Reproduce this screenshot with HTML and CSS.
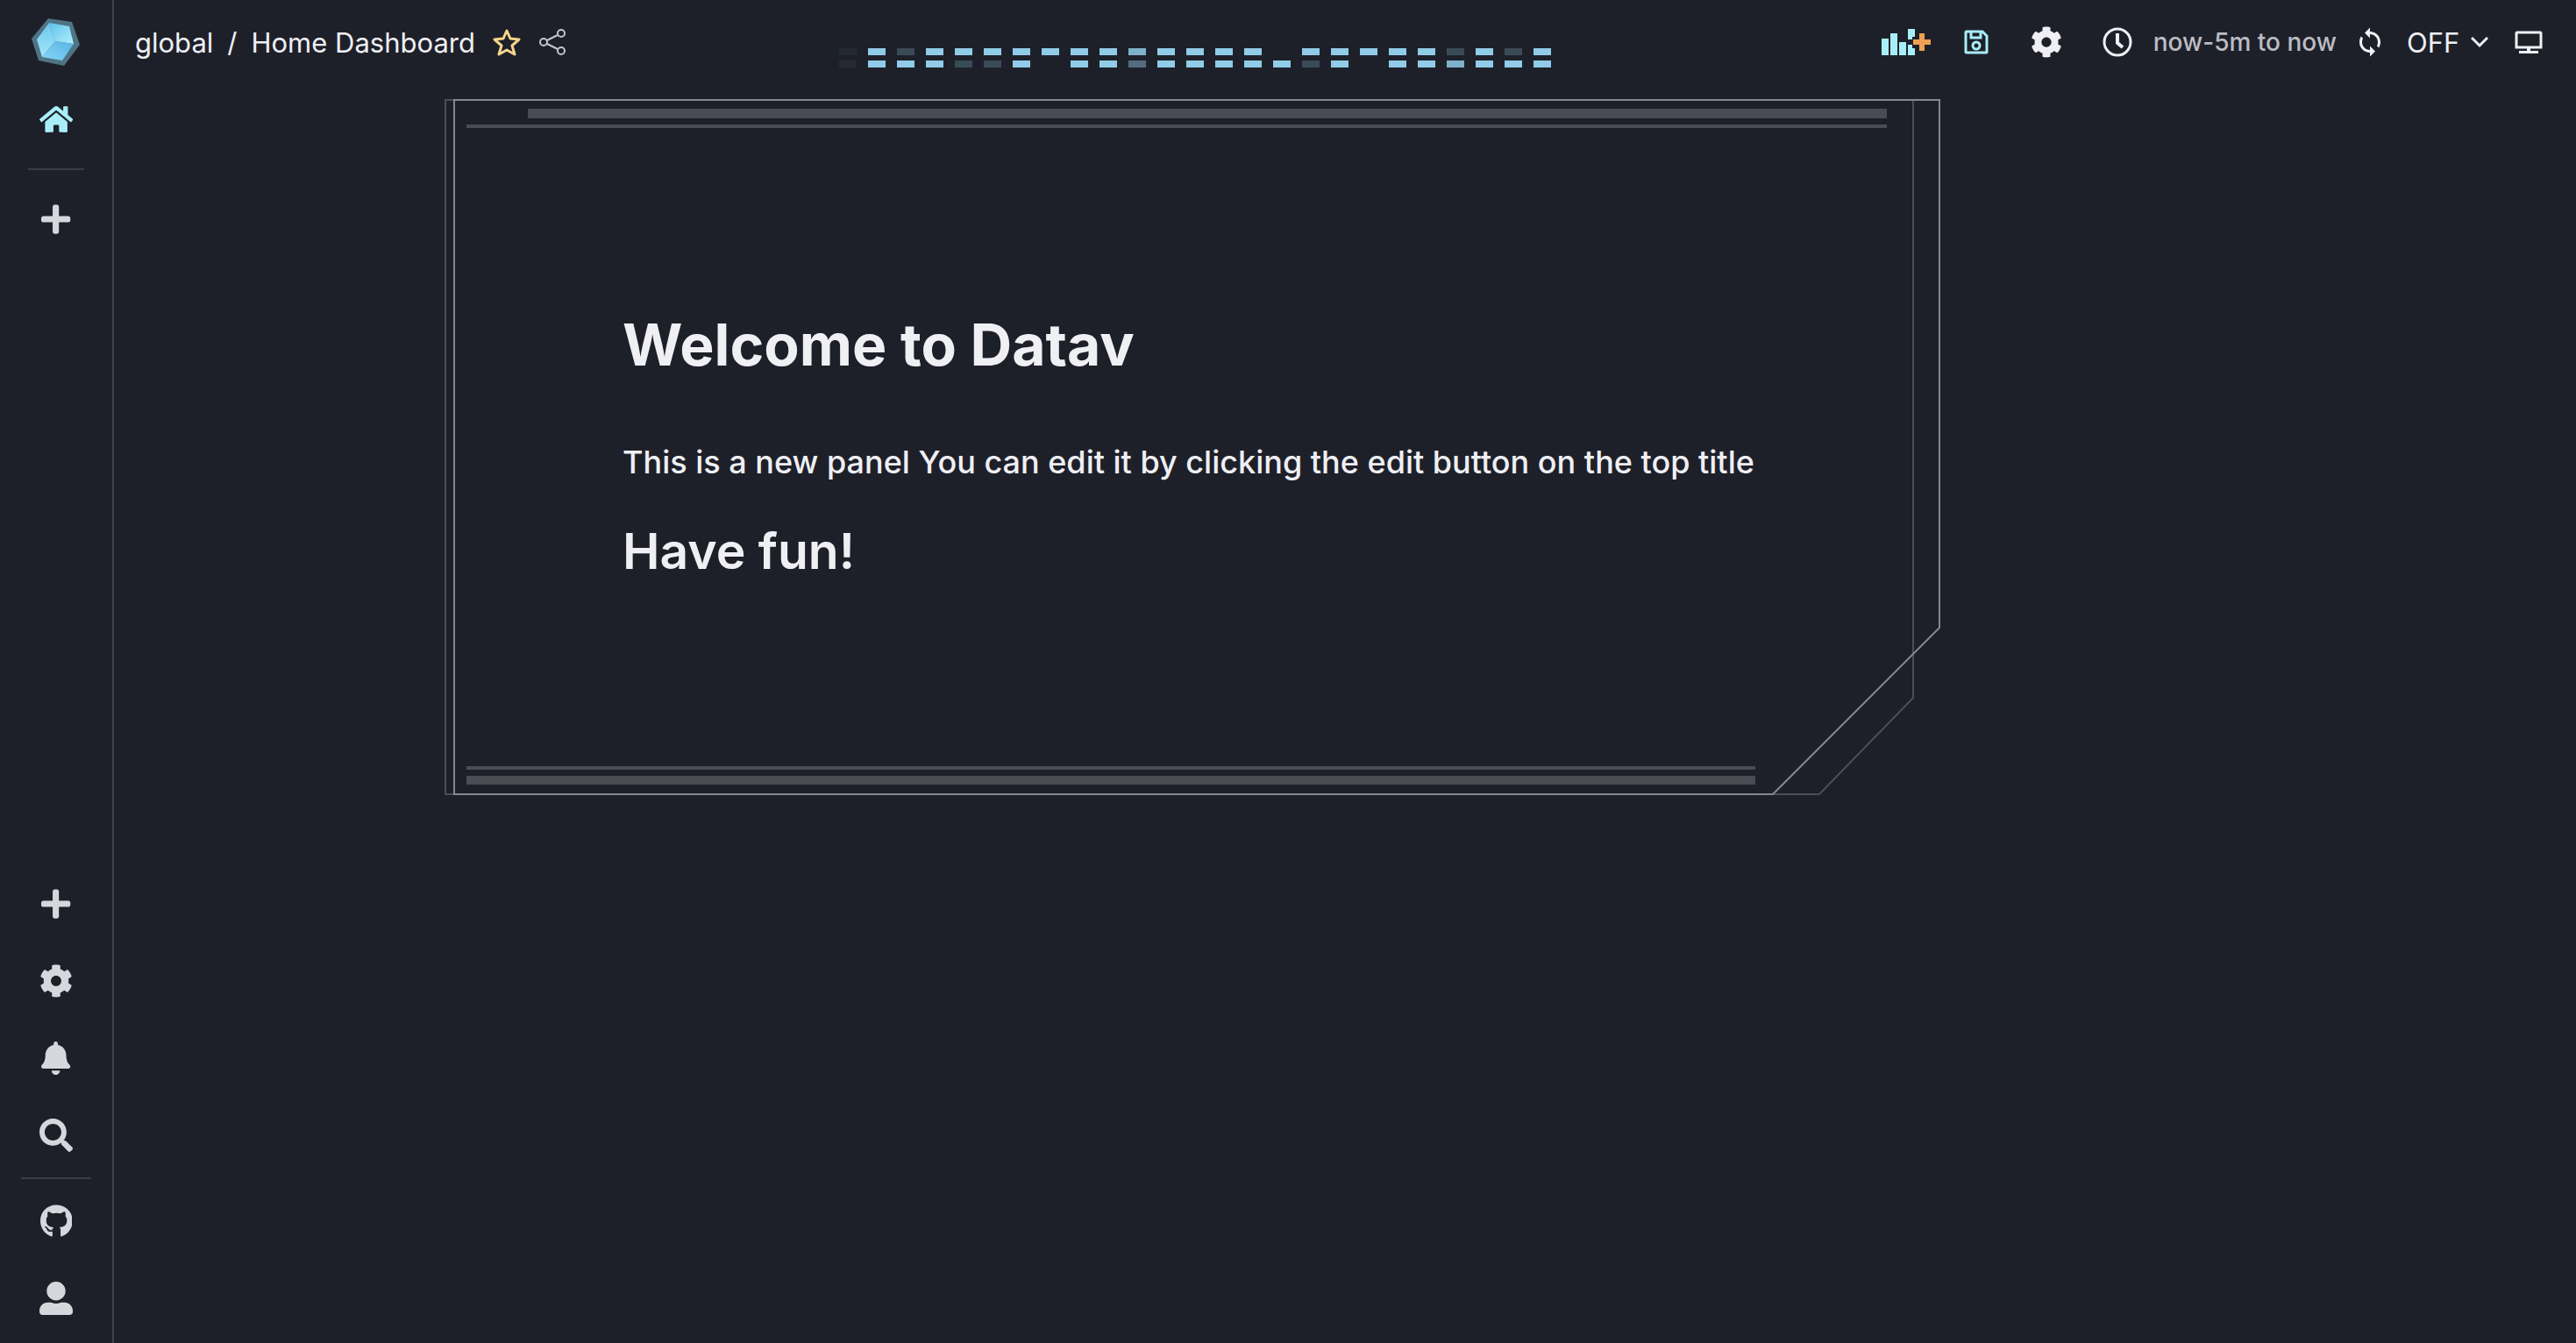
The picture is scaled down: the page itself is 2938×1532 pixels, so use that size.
FILE: index.html
```html
<!DOCTYPE html>
<html lang="en">
<head>
<meta charset="utf-8">
<meta name="viewport" content="width=device-width, initial-scale=1">
<title>Home Dashboard</title>
<link rel="stylesheet" href="styles.css">
</head>
<body>
<div class="app">
  <nav class="sidebar" aria-label="Main">
    <div class="side-group">
      <a class="logo" href="#" aria-label="Datav">
        <svg width="56" height="56" viewBox="0 0 56 56">
          <defs>
            <linearGradient id="face-left" x1="0" y1="0" x2="0" y2="1">
              <stop offset="0" stop-color="#6cc6ec"/>
              <stop offset="1" stop-color="#a2e8fc"/>
            </linearGradient>
            <linearGradient id="face-right" x1="0" y1="0" x2="1" y2="1">
              <stop offset="0" stop-color="#5fc0ea"/>
              <stop offset="1" stop-color="#b0f0fd"/>
            </linearGradient>
            <linearGradient id="face-bottom" x1="0" y1="1" x2="1" y2="0">
              <stop offset="0" stop-color="#86d6f6"/>
              <stop offset="1" stop-color="#58b4e2"/>
            </linearGradient>
          </defs>
          <path d="M19 1L46 5 55 31 37 55 8 49 0 24z" fill="#4f7484"/>
          <path d="M20 6L27 27 12 45 6 25z" fill="url(#face-left)"/>
          <path d="M20 6L43 10 48 30 27 27z" fill="url(#face-right)"/>
          <path d="M27 27L48 30 35 49 12 45z" fill="url(#face-bottom)"/>
        </svg>
      </a>
      <a class="side-link active" href="#" aria-label="Home">
        <svg class="icon" viewBox="0 0 576 512"><path d="M280.37 148.26L96 300.11V464a16 16 0 0 0 16 16l112.06-.29a16 16 0 0 0 15.92-16V368a16 16 0 0 1 16-16h64a16 16 0 0 1 16 16v95.64a16 16 0 0 0 16 16.05L464 480a16 16 0 0 0 16-16V300L295.67 148.26a12.19 12.19 0 0 0-15.3 0zM571.6 251.47L488 182.56V44.05a12 12 0 0 0-12-12h-56a12 12 0 0 0-12 12v72.61L318.47 43a48 48 0 0 0-61 0L4.34 251.47a12 12 0 0 0-1.6 16.9l25.5 31A12 12 0 0 0 45.15 301l235.22-193.74a12.19 12.19 0 0 1 15.3 0L530.9 301a12 12 0 0 0 16.9-1.6l25.5-31a12 12 0 0 0-1.7-16.93z"/></svg>
      </a>
      <hr class="rule rule-short">
      <a class="side-link" href="#" aria-label="Add menu item">
        <svg class="icon" viewBox="0 0 448 512"><path d="M416 208H272V64c0-17.67-14.33-32-32-32h-32c-17.67 0-32 14.33-32 32v144H32c-17.67 0-32 14.33-32 32v32c0 17.67 14.33 32 32 32h144v144c0 17.67 14.33 32 32 32h32c17.67 0 32-14.33 32-32V304h144c17.67 0 32-14.33 32-32v-32c0-17.67-14.33-32-32-32z"/></svg>
      </a>
    </div>
    <div class="side-group side-bottom">
      <a class="side-link" href="#" aria-label="New">
        <svg class="icon" viewBox="0 0 448 512"><path d="M416 208H272V64c0-17.67-14.33-32-32-32h-32c-17.67 0-32 14.33-32 32v144H32c-17.67 0-32 14.33-32 32v32c0 17.67 14.33 32 32 32h144v144c0 17.67 14.33 32 32 32h32c17.67 0 32-14.33 32-32V304h144c17.67 0 32-14.33 32-32v-32c0-17.67-14.33-32-32-32z"/></svg>
      </a>
      <a class="side-link" href="#" aria-label="Configuration">
        <svg class="icon" viewBox="0 0 512 512"><path d="M487.4 315.7l-42.6-24.6c4.3-23.2 4.3-47 0-70.2l42.6-24.6c4.9-2.8 7.1-8.6 5.5-14-11.1-35.6-30-67.8-54.7-94.6-3.8-4.1-10-5.1-14.8-2.3L380.8 110c-17.9-15.4-38.5-27.3-60.8-35.1V25.8c0-5.6-3.9-10.5-9.4-11.7-36.7-8.2-74.3-7.8-109.2 0-5.5 1.2-9.4 6.1-9.4 11.7V75c-22.2 7.9-42.8 19.8-60.8 35.1L88.7 85.5c-4.9-2.8-11-1.9-14.8 2.3-24.7 26.7-43.6 58.9-54.7 94.6-1.7 5.4.6 11.2 5.5 14L67.3 221c-4.3 23.2-4.3 47 0 70.2l-42.6 24.6c-4.9 2.8-7.1 8.6-5.5 14 11.1 35.6 30 67.8 54.7 94.6 3.8 4.1 10 5.1 14.8 2.3l42.6-24.6c17.9 15.4 38.5 27.3 60.8 35.1v49.2c0 5.6 3.9 10.5 9.4 11.7 36.7 8.2 74.3 7.8 109.2 0 5.5-1.2 9.4-6.1 9.4-11.7v-49.2c22.2-7.9 42.8-19.8 60.8-35.1l42.6 24.6c4.9 2.8 11 1.9 14.8-2.3 24.7-26.7 43.6-58.9 54.7-94.6 1.5-5.5-.7-11.3-5.6-14.1zM256 336c-44.1 0-80-35.9-80-80s35.9-80 80-80 80 35.9 80 80-35.9 80-80 80z"/></svg>
      </a>
      <a class="side-link" href="#" aria-label="Alerts">
        <svg class="icon" viewBox="0 0 448 512"><path d="M224 512c35.32 0 63.97-28.65 63.97-64H160.03c0 35.35 28.65 64 63.97 64zm215.39-149.71c-19.32-20.76-55.47-51.99-55.47-154.29 0-77.7-54.48-139.9-127.94-155.16V32c0-17.67-14.32-32-31.98-32s-31.98 14.33-31.98 32v20.84C118.56 68.1 64.08 130.3 64.08 208c0 102.3-36.15 133.53-55.47 154.29-6 6.45-8.66 14.16-8.61 21.71.11 16.4 12.98 32 32.1 32h383.8c19.12 0 32-15.6 32.1-32 .05-7.55-2.61-15.27-8.61-21.71z"/></svg>
      </a>
      <a class="side-link" href="#" aria-label="Search">
        <svg class="icon" viewBox="0 0 512 512"><path d="M505 442.7L405.3 343c-4.5-4.5-10.6-7-17-7H372c27.6-35.3 44-79.7 44-128C416 93.1 322.9 0 208 0S0 93.1 0 208s93.1 208 208 208c48.3 0 92.7-16.4 128-44v16.3c0 6.4 2.5 12.5 7 17l99.7 99.7c9.4 9.4 24.6 9.4 33.9 0l28.3-28.3c9.4-9.4 9.4-24.6.1-34zM208 336c-70.7 0-128-57.2-128-128 0-70.7 57.2-128 128-128 70.7 0 128 57.2 128 128 0 70.7-57.2 128-128 128z"/></svg>
      </a>
      <hr class="rule">
      <a class="side-link" href="#" aria-label="GitHub">
        <svg class="icon" viewBox="0 0 496 512"><path d="M165.9 397.4c0 2-2.3 3.6-5.2 3.6-3.3.3-5.6-1.3-5.6-3.6 0-2 2.3-3.6 5.2-3.6 3-.3 5.6 1.3 5.6 3.6zm-31.1-4.5c-.7 2 1.3 4.3 4.3 4.9 2.6 1 5.6 0 6.2-2s-1.3-4.3-4.3-5.2c-2.6-.7-5.5.3-6.2 2.3zm44.2-1.7c-2.9.7-4.9 2.6-4.6 4.9.3 2 2.9 3.3 5.9 2.6 2.9-.7 4.9-2.6 4.6-4.6-.3-1.9-3-3.2-5.9-2.9zM244.8 8C106.1 8 0 113.3 0 252c0 110.9 69.8 205.8 169.5 239.2 12.8 2.3 17.3-5.6 17.3-12.1 0-6.2-.3-40.4-.3-61.4 0 0-70 15-84.7-29.8 0 0-11.4-29.1-27.8-36.6 0 0-22.9-15.7 1.6-15.4 0 0 24.9 2 38.6 25.8 21.9 38.6 58.6 27.5 72.9 20.9 2.3-16 8.8-27.1 16-33.7-55.9-6.2-112.3-14.3-112.3-110.5 0-27.5 7.6-41.3 23.6-58.9-2.6-6.5-11.1-33.3 2.6-67.9 20.9-6.5 69 27 69 27 20-5.6 41.5-8.5 62.8-8.5s42.8 2.9 62.8 8.5c0 0 48.1-33.6 69-27 13.7 34.7 5.2 61.4 2.6 67.9 16 17.7 25.8 31.5 25.8 58.9 0 96.5-58.9 104.2-114.8 110.5 9.2 7.9 17 22.9 17 46.4 0 33.7-.3 75.4-.3 83.6 0 6.5 4.6 14.4 17.3 12.1C428.2 457.8 496 362.9 496 252 496 113.3 383.5 8 244.8 8z"/></svg>
      </a>
      <a class="side-link" href="#" aria-label="Account">
        <svg class="icon" viewBox="0 0 512 512"><path d="M256 288c79.5 0 144-64.5 144-144S335.5 0 256 0 112 64.5 112 144s64.5 144 144 144zm128 32h-55.1c-22.2 10.2-46.9 16-72.9 16s-50.6-5.8-72.9-16H128C57.3 320 0 377.3 0 448v16c0 26.5 21.5 48 48 48h416c26.5 0 48-21.5 48-48v-16c0-70.7-57.3-128-128-128z"/></svg>
      </a>
    </div>
  </nav>

  <div class="page">
    <header class="topbar">
      <div class="crumbs">
        <a href="#">global</a>
        <span>/</span>
        <a href="#">Home Dashboard</a>
        <button class="crumb-btn star" type="button" aria-label="Star dashboard">
          <svg width="32" height="32" viewBox="0 0 32 32"><path d="M16 3l4 9 10 1-8 7 3 10-9-5-9 5 3-10-8-7 10-1z" fill="none" stroke="currentColor" stroke-width="3" stroke-linejoin="round"/></svg>
        </button>
        <button class="crumb-btn share" type="button" aria-label="Share dashboard">
          <svg width="32" height="32" viewBox="0 0 32 32" fill="none" stroke="currentColor" stroke-width="2"><circle cx="6" cy="16" r="4"/><circle cx="26" cy="6" r="4"/><circle cx="26" cy="26" r="4"/><path d="M10 14L22 8M10 18L22 24"/></svg>
        </button>
      </div>
      <svg class="blips" viewBox="0 0 812 22" aria-hidden="true">
        <g opacity=".06"><path d="M0 0h20v8H0zM0 14h20v8H0z"/></g>
        <path d="M33 0h20v8H33zM99 0h20v8H99zM132 0h20v8H132zM165 0h20v8H165zM198 0h20v8H198zM231 0h20v8H231zM264 0h20v8H264zM297 0h20v8H297zM363 0h20v8H363zM396 0h20v8H396zM429 0h20v8H429zM462 0h20v8H462zM528 0h20v8H528zM561 0h20v8H561zM594 0h20v8H594zM627 0h20v8H627zM660 0h20v8H660zM726 0h20v8H726zM792 0h20v8H792z"/>
        <path d="M33 14h20v8H33zM66 14h20v8H66zM99 14h20v8H99zM198 14h20v8H198zM264 14h20v8H264zM297 14h20v8H297zM363 14h20v8H363zM396 14h20v8H396zM429 14h20v8H429zM462 14h20v8H462zM495 14h20v8H495zM561 14h20v8H561zM627 14h20v8H627zM660 14h20v8H660zM726 14h20v8H726zM759 14h20v8H759zM792 14h20v8H792z"/>
        <path opacity=".25" d="M66 0h20v8H66zM132 14h20v8H132zM165 14h20v8H165zM528 14h20v8H528zM693 0h20v8H693zM759 0h20v8H759z"/>
        <path opacity=".85" d="M330 0h20v8H330zM693 14h20v8H693z"/>
        <path opacity=".45" d="M330 14h20v8H330z"/>
      </svg>
      <div class="tools">
        <button class="tool accent" type="button" aria-label="Add panel">
          <svg width="56" height="32" viewBox="0 0 56 32">
            <path fill="currentColor" d="M0 12h8v19H0zM10 6h8v25h-8zM20 16h8v15h-8zM30 1h8v9h-3v3h-5zM30 19h5v4h3v8h-8z"/>
            <path fill="#f0a050" d="M43 6h6v7h7v6h-7v7h-6v-7h-7v-6h7z"/>
          </svg>
        </button>
        <button class="tool accent" type="button" aria-label="Save dashboard">
          <svg width="28" height="28" viewBox="0 0 28 28" fill="none" stroke="currentColor" stroke-width="3"><path d="M3 2h18l5 5v18a1 1 0 0 1-1 1H3a1 1 0 0 1-1-1V3a1 1 0 0 1 1-1z"/><path d="M8 2v7h11V2"/><circle cx="14" cy="18" r="4"/></svg>
        </button>
        <button class="tool" type="button" aria-label="Dashboard settings">
          <svg width="36" height="36" viewBox="0 0 512 512" fill="currentColor"><path d="M487.4 315.7l-42.6-24.6c4.3-23.2 4.3-47 0-70.2l42.6-24.6c4.9-2.8 7.1-8.6 5.5-14-11.1-35.6-30-67.8-54.7-94.6-3.8-4.1-10-5.1-14.8-2.3L380.8 110c-17.9-15.4-38.5-27.3-60.8-35.1V25.8c0-5.6-3.9-10.5-9.4-11.7-36.7-8.2-74.3-7.8-109.2 0-5.5 1.2-9.4 6.1-9.4 11.7V75c-22.2 7.9-42.8 19.8-60.8 35.1L88.7 85.5c-4.9-2.8-11-1.9-14.8 2.3-24.7 26.7-43.6 58.9-54.7 94.6-1.7 5.4.6 11.2 5.5 14L67.3 221c-4.3 23.2-4.3 47 0 70.2l-42.6 24.6c-4.9 2.8-7.1 8.6-5.5 14 11.1 35.6 30 67.8 54.7 94.6 3.8 4.1 10 5.1 14.8 2.3l42.6-24.6c17.9 15.4 38.5 27.3 60.8 35.1v49.2c0 5.6 3.9 10.5 9.4 11.7 36.7 8.2 74.3 7.8 109.2 0 5.5-1.2 9.4-6.1 9.4-11.7v-49.2c22.2-7.9 42.8-19.8 60.8-35.1l42.6 24.6c4.9 2.8 11 1.9 14.8-2.3 24.7-26.7 43.6-58.9 54.7-94.6 1.5-5.5-.7-11.3-5.6-14.1zM256 336c-44.1 0-80-35.9-80-80s35.9-80 80-80 80 35.9 80 80-35.9 80-80 80z"/></svg>
        </button>
        <button class="range" type="button">
          <svg width="34" height="34" viewBox="0 0 34 34" fill="none" stroke="currentColor" stroke-width="3"><circle cx="17" cy="17" r="15"/><path d="M17 7v11l6 5" stroke-width="4"/></svg>
          <span>now-5m to now</span>
        </button>
        <button class="plain" type="button" aria-label="Refresh">
          <svg width="36" height="36" viewBox="0 0 24 24" fill="currentColor"><path d="M12 4V1L8 5l4 4V6c3.31 0 6 2.69 6 6 0 1.01-.25 1.97-.7 2.8l1.46 1.46C19.54 15.03 20 13.57 20 12c0-4.42-3.58-8-8-8zm0 14c-3.31 0-6-2.69-6-6 0-1.01.25-1.97.7-2.8L5.24 7.74C4.46 8.97 4 10.43 4 12c0 4.42 3.58 8 8 8v3l4-4-4-4v3z"/></svg>
        </button>
        <label class="interval">
          <select aria-label="Refresh interval"><option>OFF</option><option>5s</option><option>10s</option><option>1m</option></select>
          <svg width="20" height="14" viewBox="0 0 20 14" fill="none" stroke="currentColor" stroke-width="3"><path d="M1 2l9 9 9-9"/></svg>
        </label>
        <button class="plain" type="button" aria-label="Full screen">
          <svg width="32" height="28" viewBox="0 0 32 28"><path fill="none" stroke="currentColor" stroke-width="3" d="M3 3h26a1 1 0 0 1 1 1v16H2V4a1 1 0 0 1 1-1z"/><path fill="currentColor" d="M14 21h4v3h9v3H5v-3h9z"/></svg>
        </button>
      </div>
    </header>

    <main class="board">
      <section class="panel">
        <svg class="frame" viewBox="0 0 1708 794" fill="none" preserveAspectRatio="none" aria-hidden="true">
          <path class="line-dim" d="M2 1H1676V683L1569 793H2z"/>
          <path class="line" d="M12 1H1706V603L1516 793H12z"/>
          <path class="bar" d="M96 11H1646V22H96zM26 29H1646V33H26zM26 761H1496V765H26zM26 772H1496V782H26z"/>
        </svg>
        <div class="panel-body">
          <h1>Welcome to Datav</h1>
          <p>This is a new panel You can edit it by clicking the edit button on the top title</p>
          <h2>Have fun!</h2>
        </div>
      </section>
    </main>
  </div>
</div>
</body>
</html>
```
FILE: styles.css
```css
* {
  box-sizing: border-box;
}

body {
  margin: 0;
  background: #1e2029;
  color: #efeff4;
  font-family: Inter, "Liberation Sans", sans-serif;
  font-size: 31px;
}

a {
  color: inherit;
  text-decoration: none;
}

button,
select {
  margin: 0;
  padding: 0;
  border: 0;
  background: none;
  color: inherit;
  font: inherit;
}

svg {
  display: block;
  flex: none;
}

.app {
  display: flex;
  min-height: 100vh;
}

/* Sidebar */
.sidebar {
  display: flex;
  flex: none;
  flex-direction: column;
  justify-content: space-between;
  width: 130px;
  padding-bottom: 7px;
  border-right: 2px solid #41434b;
}

.side-group {
  display: flex;
  flex-direction: column;
  align-items: center;
}

.logo {
  display: flex;
  align-items: center;
  height: 96px;
}

.side-link {
  display: flex;
  align-items: center;
  justify-content: center;
  width: 88px;
  height: 88px;
  color: #d5d7dc;
}

.active {
  height: 80px;
  color: #a8eef8;
}

.icon {
  height: 38px;
  fill: currentColor;
}

.active .icon {
  height: 34px;
}

.rule {
  width: 80px;
  height: 2px;
  margin: 4px 0;
  border: 0;
  background: #3b3e45;
}

.rule-short {
  width: 64px;
  margin: 16px 0 12px;
}

/* Top bar */
.page {
  flex: 1;
  min-width: 0;
}

.topbar {
  display: grid;
  grid-template-columns: 827fr 812px 1169fr;
  align-items: center;
  height: 96px;
}

.crumbs {
  display: flex;
  align-items: center;
  padding-left: 24px;
  gap: 16px;
  white-space: nowrap;
}

.crumb-btn {
  width: 32px;
  margin-left: 4px;
}

.star {
  color: #f5d58c;
}

.share {
  color: #c4c5ca;
}

.blips {
  align-self: end;
  width: 812px;
  height: 22px;
  margin-bottom: 19px;
  fill: #90cbe8;
}

.tools {
  display: flex;
  align-items: center;
  justify-content: flex-end;
  padding-right: 38px;
  white-space: nowrap;
}

.tool {
  display: flex;
  align-items: center;
  justify-content: center;
  width: 80px;
  height: 80px;
}

.accent {
  color: #a8eef8;
}

.range {
  display: flex;
  align-items: center;
  gap: 24px;
  margin: 0 20px 0 24px;
}

.range span {
  color: #bbbcc3;
  font-size: 28px;
  font-weight: 500;
}

.interval {
  display: flex;
  align-items: center;
  gap: 12px;
  margin: 0 30px 0 24px;
}

.interval select {
  appearance: none;
}

/* Dashboard */
.board {
  display: grid;
  grid-template-columns: 376fr 1708fr 724fr;
  padding-top: 17px;
}

.panel {
  position: relative;
  grid-column: 2;
}

.frame {
  position: absolute;
  inset: 0;
  width: 100%;
  height: 100%;
}

.line {
  stroke: #85878d;
  stroke-width: 2;
}

.line-dim {
  stroke: #4c4e56;
  stroke-width: 2;
}

.bar {
  fill: #4a4c54;
}

.panel-body {
  position: relative;
  padding: 238px 184px 242px 204px;
  white-space: nowrap;
}

h1,
h2,
p {
  margin: 0;
}

h1 {
  font-size: 66px;
  font-weight: 700;
  line-height: 84px;
}

p {
  margin: 64px 0 38px;
  font-size: 36px;
  font-weight: 500;
  line-height: 56px;
}

h2 {
  font-size: 57px;
  font-weight: 600;
  line-height: 72px;
}
```
